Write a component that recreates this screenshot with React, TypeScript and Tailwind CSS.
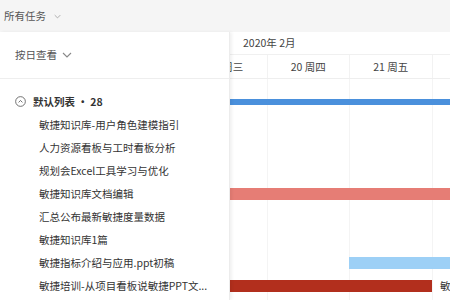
import React from "react";

const items = [
  "敏捷知识库-用户角色建模指引",
  "人力资源看板与工时看板分析",
  "规划会Excel工具学习与优化",
  "敏捷知识库文档编辑",
  "汇总公布最新敏捷度量数据",
  "敏捷知识库1篇",
  "敏捷指标介绍与应用.ppt初稿",
  "敏捷培训-从项目看板说敏捷PPT文...",
];

const days = ["19 周三", "20 周四", "21 周五", "22 周六"];

function Chevron({ className }: { className?: string }) {
  return (
    <svg viewBox="0 0 10 6" className={className} fill="none" stroke="currentColor" strokeWidth="1.1">
      <path d="M1 1l4 4 4-4" />
    </svg>
  );
}

export default function App() {
  const font = { fontFamily: '"PingFang SC","Noto Sans CJK SC","Noto Sans",sans-serif' };
  return (
    <div className="w-[450px] h-[300px] overflow-hidden bg-[#f5f5f5] flex flex-col" style={font}>
      <div className="h-[32px] shrink-0 flex items-center pl-[4px] text-[10.5px] text-[#555]">
        <span>所有任务</span>
        <Chevron className="w-[7px] h-[5px] ml-[8px] text-[#999]" />
      </div>
      <div className="flex-1 flex bg-white min-h-0">
        <div className="w-[230px] shrink-0 relative z-10 bg-white shadow-[2px_0_3px_rgba(0,0,0,0.06)] border-r border-[#ececec]">
          <div className="h-[47px] flex items-center pl-[15px] border-b border-[#eeeeee] text-[10.5px] text-[#555]">
            <span>按日查看</span>
            <Chevron className="w-[10px] h-[6px] ml-[5px] text-[#888]" />
          </div>
          <div className="pt-[11px]">
            <div className="h-[23px] flex items-center pl-[15px] text-[10.5px] font-bold text-[#333]">
              <svg viewBox="0 0 12 12" className="w-[11px] h-[11px] text-[#555]" fill="none" stroke="currentColor" strokeWidth="0.9">
                <circle cx="6" cy="6" r="5.3" />
                <path d="M3.9 7l2.1-2.1 2.1 2.1" />
              </svg>
              <span className="ml-[7px]">默认列表 · 28</span>
            </div>
            {items.map((t) => (
              <div key={t} className="h-[23px] flex items-center pl-[39px] text-[10.5px] text-[#333] whitespace-nowrap">
                {t}
              </div>
            ))}
          </div>
        </div>
        <div className="flex-1 overflow-hidden relative">
          <div className="ml-[-45px] w-[330px] relative">
            <div className="h-[23px] flex items-center pl-[58px] border-b border-[#f0f0f0] text-[10.5px] text-[#444]">
              2020年 2月
            </div>
            <div className="flex h-[24px] border-b border-[#eeeeee]">
              {days.map((d) => (
                <div key={d} className="w-[82.5px] shrink-0 border-r border-[#f2f2f2] flex items-center justify-center text-[10.5px] text-[#444]">
                  {d}
                </div>
              ))}
            </div>
            <div className="relative h-[230px]">
              <div className="absolute inset-0 flex">
                {days.map((d) => (
                  <div key={d} className="w-[82.5px] shrink-0 border-r border-[#f4f4f4]" />
                ))}
              </div>
              <div className="relative pt-[11px]">
                <div className="h-[23px] flex items-center">
                  <div className="ml-[45px] w-[300px] h-[6px] bg-[#4a90dc]" />
                </div>
                <div className="h-[23px]" />
                <div className="h-[23px]" />
                <div className="h-[23px]" />
                <div className="h-[23px] flex items-center">
                  <div className="ml-[45px] w-[300px] h-[12px] bg-[#e67d75]" />
                </div>
                <div className="h-[23px]" />
                <div className="h-[23px]" />
                <div className="h-[23px] flex items-center">
                  <div className="ml-[164px] w-[200px] h-[12px] bg-[#9dd0f6]" />
                </div>
                <div className="h-[23px] flex items-center">
                  <div className="ml-[45px] w-[202px] h-[12px] bg-[#b22f1d]" />
                  <span className="ml-[8px] text-[10.5px] text-[#333] whitespace-nowrap">敏捷培训</span>
                </div>
              </div>
            </div>
          </div>
        </div>
      </div>
    </div>
  );
}
